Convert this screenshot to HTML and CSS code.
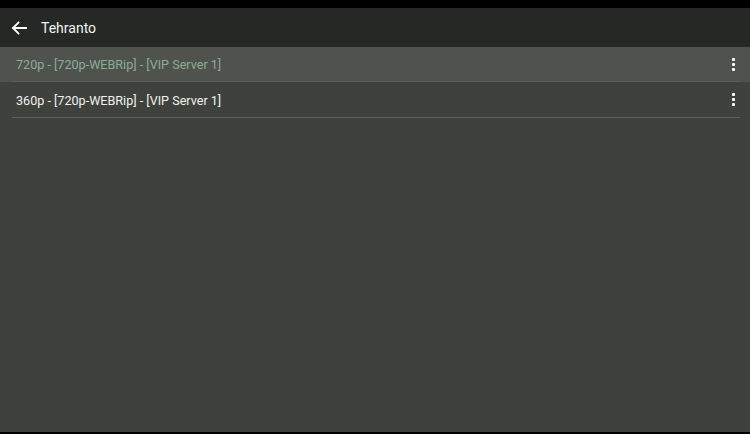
FILE: index.html
```html
<!DOCTYPE html>
<html>
<head>
<meta charset="utf-8">
<link rel="stylesheet" href="styles.css">
</head>
<body>
<div class="screen">
  <div class="statusbar"></div>
  <header class="toolbar">
    <svg class="back" width="16" height="14" viewBox="0 0 16 14">
      <path d="M15 7H2M7.5 1.5L2 7l5.5 5.5" fill="none" stroke="#ffffff" stroke-width="1.8" stroke-linecap="square"/>
    </svg>
    <span class="title">Tehranto</span>
  </header>
  <ul class="list">
    <li class="row active">
      <div class="row-inner">
        <span class="label">720p - [720p-WEBRip] - [VIP Server 1]</span>
        <span class="more"><i></i><i></i><i></i></span>
      </div>
    </li>
    <li class="row">
      <div class="row-inner">
        <span class="label">360p - [720p-WEBRip] - [VIP Server 1]</span>
        <span class="more"><i></i><i></i><i></i></span>
      </div>
    </li>
  </ul>
  <div class="fill"></div>
  <div class="navbar"></div>
</div>
</body>
</html>
```
FILE: styles.css
```css
html, body {
  margin: 0;
  padding: 0;
  height: 100%;
}
body {
  background: #3e413c;
  font-family: Roboto, "Liberation Sans", sans-serif;
}
.screen {
  display: flex;
  flex-direction: column;
  height: 100vh;
}
.statusbar {
  height: 8px;
  background: #000;
  flex: none;
}
.toolbar {
  height: 39px;
  flex: none;
  background: #252824;
  display: flex;
  align-items: center;
  padding-left: 11px;
  box-sizing: border-box;
}
.back {
  display: block;
  margin-top: 1px;
}
.title {
  color: #f2f2f2;
  font-size: 14px;
  margin-left: 14px;
  margin-top: 1px;
}
.list {
  list-style: none;
  margin: 0;
  padding: 0;
  flex: none;
}
.row {
  padding: 0 10px 0 12px;
}
.row.active {
  background: #50534d;
}
.row-inner {
  height: 36px;
  box-sizing: border-box;
  border-bottom: 1px solid #5b5e58;
  display: flex;
  align-items: center;
  justify-content: space-between;
  padding: 0 5px 0 4px;
}
.row.active .row-inner {
  height: 35px;
}
.label {
  font-size: 12.6px;
  color: #f0f0f0;
  margin-top: 1px;
}
.active .label {
  color: #8aad95;
}
.more {
  display: flex;
  flex-direction: column;
  gap: 2px;
}
.more i {
  display: block;
  width: 3px;
  height: 3px;
  background: #ffffff;
  border-radius: 1px;
}
.fill {
  flex: 1;
}
.navbar {
  height: 2px;
  background: #000;
  flex: none;
}
```
